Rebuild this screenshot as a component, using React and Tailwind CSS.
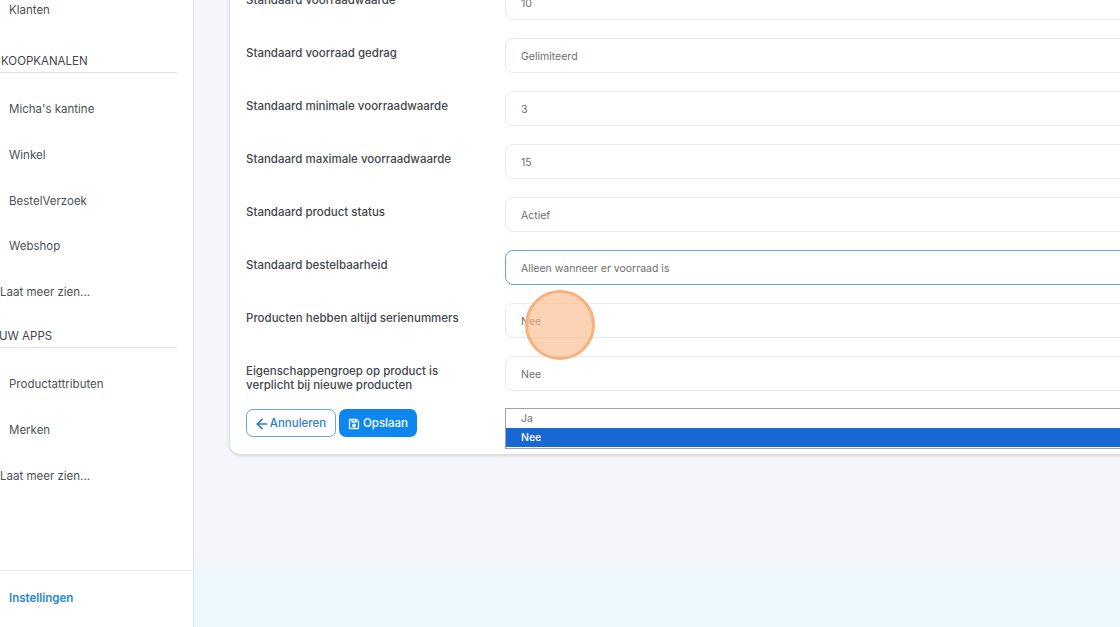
import React from "react";
import { ArrowLeft } from "lucide-react";

const rows = [
  { label: "Standaard voorraadwaarde", value: "10" },
  { label: "Standaard voorraad gedrag", value: "Gelimiteerd" },
  { label: "Standaard minimale voorraadwaarde", value: "3" },
  { label: "Standaard maximale voorraadwaarde", value: "15" },
  { label: "Standaard product status", value: "Actief" },
  { label: "Standaard bestelbaarheid", value: "Alleen wanneer er voorraad is", focused: true },
  { label: "Producten hebben altijd serienummers", value: "Nee" },
  { label: "Eigenschappengroep op product is verplicht bij nieuwe producten", value: "Nee" },
];

function NavItem({ children, className = "" }) {
  return <div className={`pl-[9px] text-[11.5px] leading-[20px] text-[#4a5157] ${className}`}>{children}</div>;
}

function SectionTitle({ children, className = "" }) {
  return (
    <div className={`w-[177px] border-b border-[#e3e5e8] pb-[2px] text-[11.5px] leading-[18px] text-[#3f464c] ${className}`}>
      {children}
    </div>
  );
}

function SaveIcon() {
  return (
    <svg width="12" height="12" viewBox="0 0 24 24" fill="none" stroke="currentColor" strokeWidth="2.6" strokeLinejoin="round">
      <path d="M4 3h13l4 4v13a1 1 0 0 1-1 1H4a1 1 0 0 1-1-1V4a1 1 0 0 1 1-1z" />
      <path d="M8 3v5h8V3" />
      <circle cx="12" cy="15" r="2.5" fill="currentColor" />
    </svg>
  );
}

export default function App() {
  return (
    <div className="relative flex h-[627px] w-[1120px] overflow-hidden bg-white font-['Inter',sans-serif]">
      <aside className="flex w-[194px] shrink-0 flex-col border-r border-[#e3e5e8] shadow-[1px_0_3px_rgba(0,0,0,0.06)]">
        <div className="flex-1">
          <NavItem>Klanten</NavItem>
          <SectionTitle className="mt-[32px] pl-[1px]">KOOPKANALEN</SectionTitle>
          <div className="mt-[26px] flex flex-col gap-[25.75px]">
            <NavItem>Micha's kantine</NavItem>
            <NavItem>Winkel</NavItem>
            <NavItem>BestelVerzoek</NavItem>
            <NavItem>Webshop</NavItem>
            <div className="text-[11.5px] leading-[20px] text-[#4a5157]">Laat meer zien...</div>
          </div>
          <SectionTitle className="mt-[25px] indent-[-1px]">UW APPS</SectionTitle>
          <div className="mt-[26px] flex flex-col gap-[25.75px]">
            <NavItem>Productattributen</NavItem>
            <NavItem>Merken</NavItem>
            <div className="text-[11.5px] leading-[20px] text-[#4a5157]">Laat meer zien...</div>
          </div>
        </div>
        <div className="flex h-[57px] items-center border-t border-[#e6e8eb] pl-[9px] text-[11.5px] font-semibold text-[#2388d8]">
          Instellingen
        </div>
      </aside>

      <main className="flex min-w-0 flex-1 flex-col bg-[#f5f6fb]">
        <div className="flex-1 overflow-hidden pl-[36px]">
          <div className="relative mt-[-32px] h-[486px] w-[1000px] rounded-[10px] bg-white pl-[16px] pt-[17px] shadow-[0_1px_4px_rgba(0,0,0,0.18)]">
            <div className="flex flex-col gap-[18px]">
              {rows.map((row) => (
                <div key={row.label} className="flex h-[35px] items-start">
                  <div className="w-[259px] pr-[20px] pt-[8px] text-[11.5px] leading-[14px] font-medium text-[#3f464c]">
                    {row.label}
                  </div>
                  <div
                    className={`flex h-[35px] flex-1 items-center rounded-[8px] border bg-white pl-[15px] pt-[2px] text-[10.5px] text-[#6e6e6e] ${
                      row.focused ? "border-[#6ba6d0]" : "border-[#e8eaec]"
                    }`}
                  >
                    {row.value}
                  </div>
                </div>
              ))}
            </div>
            <div className="mt-[18px] flex gap-[3px]">
              <button className="flex h-[28px] w-[90px] items-center justify-center rounded-[7px] border border-[#6ba6d0] bg-white pr-[2px] pt-[1px] text-[11.5px] font-medium text-[#2b7fc4]">
                <ArrowLeft size={16} strokeWidth={2.6} />
                Annuleren
              </button>
              <button className="flex h-[28px] w-[78px] items-center justify-center gap-[3px] rounded-[7px] bg-[#0d86f0] pt-[1px] text-[11.5px] font-medium text-white">
                <SaveIcon />
                Opslaan
              </button>
            </div>
            <div className="absolute left-[275px] top-[440px] w-[725px] border border-[#a3a3a3] bg-white pb-[1px] text-[10.5px] leading-[18px]">
              <div className="pl-[15px] pt-[1px] text-[#6e6e6e]">Ja</div>
              <div className="bg-[#1967d2] pl-[15px] pt-[1px] font-medium text-white">Nee</div>
            </div>
          </div>
        </div>
        <div className="h-[59px] bg-[#eef9ff]" />
      </main>

      <div className="absolute left-[525px] top-[290px] h-[70px] w-[70px] rounded-full border-[3px] border-[#f5b27c] bg-[#fbb684]/60" />
    </div>
  );
}
